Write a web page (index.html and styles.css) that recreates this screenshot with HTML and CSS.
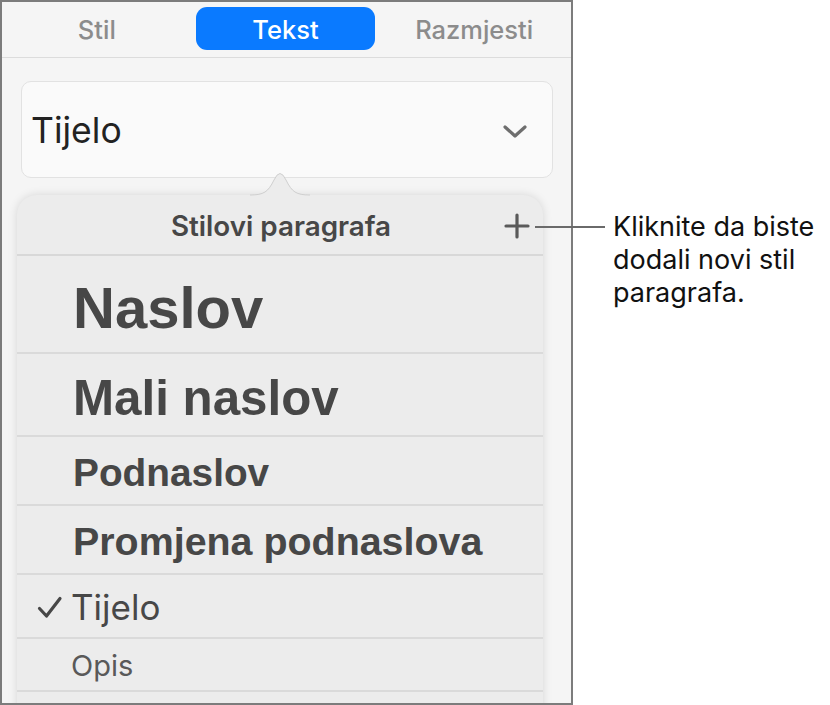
FILE: index.html
```html
<!DOCTYPE html>
<html lang="hr">
<head>
<meta charset="utf-8">
<title>Stilovi paragrafa</title>
<link rel="stylesheet" href="styles.css">
</head>
<body>
<div class="page">
  <div class="panel">
    <div class="tabs">
      <div class="tab">Stil</div>
      <div class="tab tab-active"><span class="pill">Tekst</span></div>
      <div class="tab">Razmjesti</div>
    </div>
    <div class="field">
      <span class="field-text">Tijelo</span>
      <svg class="chevron" width="26" height="16" viewBox="0 0 26 16"><path d="M3 3 L13 12 L23 3" fill="none" stroke="#6e6e6e" stroke-width="3.2" stroke-linecap="round" stroke-linejoin="round"/></svg>
    </div>
    <div class="popover">
      <svg class="arrow" width="60" height="28" viewBox="0 0 60 28"><path d="M0 27 C14 27 18 24 24 12 Q30 -1 36 12 C42 24 46 27 60 27 Z" fill="#ececec"/><path d="M0 27 C14 27 18 24 24 12 Q30 -1 36 12 C42 24 46 27 60 27" fill="none" stroke="#cfcfcf" stroke-width="1"/></svg>
      <div class="pop-head">
        <span class="pop-title">Stilovi paragrafa</span>
        <svg class="plus" width="26" height="26" viewBox="0 0 26 26"><path d="M13 2 V24 M2 13 H24" stroke="#5a5a5a" stroke-width="3.2" stroke-linecap="round"/></svg>
      </div>
      <div class="row r1"><span class="t-naslov">Naslov</span></div>
      <div class="row r2"><span class="t-mali">Mali naslov</span></div>
      <div class="row r3"><span class="t-pod">Podnaslov</span></div>
      <div class="row r4"><span class="t-pod t-wide">Promjena podnaslova</span></div>
      <div class="row r5">
        <svg class="check" width="26" height="23" viewBox="0 0 26 23"><path d="M2.5 12.5 L9.5 20 L23 2.5" fill="none" stroke="#474747" stroke-width="3.2" stroke-linecap="round" stroke-linejoin="round"/></svg>
        <span class="t-body">Tijelo</span>
      </div>
      <div class="row r6"><span class="t-opis">Opis</span></div>
      <div class="row r7"></div>
    </div>
  </div>
  <div class="callout">
    <div class="leader"></div>
    <p class="callout-text">Kliknite da biste<br>dodali novi stil<br>paragrafa.</p>
  </div>
</div>
</body>
</html>
```

FILE: styles.css
```css
html, body {
  margin: 0;
  padding: 0;
  background: #ffffff;
}
.page {
  display: flex;
  width: 830px;
  height: 705px;
  position: relative;
  font-family: "Inter", "Liberation Sans", sans-serif;
}
.panel {
  width: 573px;
  height: 705px;
  box-sizing: border-box;
  border: 2px solid #7c7c7c;
  background: #f5f5f5;
  overflow: hidden;
  flex: none;
}
.tabs {
  display: grid;
  grid-template-columns: 1fr 1fr 1fr;
  height: 55px;
  border-bottom: 1px solid #dcdcdc;
}
.tab {
  display: flex;
  justify-content: center;
  align-items: flex-start;
  padding-top: 7px;
  font-size: 25.5px;
  font-weight: 500;
  color: #8c8c8c;
  line-height: 42px;
}
.tab:last-child {
  padding-right: 4px;
}
.tab-active {
  padding-top: 5px;
}
.pill {
  display: block;
  box-sizing: border-box;
  width: 179px;
  height: 43px;
  padding-top: 3px;
  line-height: 40px;
  border-radius: 11px;
  background: #0a7aff;
  color: #ffffff;
  text-align: center;
  margin-left: -2px;
}
.field {
  margin: 23px 18px 0 19px;
  height: 97px;
  box-sizing: border-box;
  border: 1px solid #e2e2e2;
  border-radius: 10px;
  background: #fafafa;
  display: flex;
  align-items: center;
  justify-content: space-between;
  padding: 0 24px 0 9px;
}
.field-text {
  font-size: 35.5px;
  color: #222;
  font-weight: 400;
  margin-top: 1px;
}
.chevron {
  margin-top: 4px;
}
.popover {
  position: relative;
  margin: 17px 0 0 15px;
  width: 526px;
  height: 520px;
  background: #ececec;
  border-radius: 20px 20px 0 0;
  box-shadow: 0 0 10px rgba(0,0,0,0.13);
}
.arrow {
  position: absolute;
  top: -27px;
  left: 233px;
}
.pop-head {
  height: 59px;
  border-bottom: 2px solid #d8d8d8;
  display: flex;
  align-items: center;
  justify-content: center;
  position: relative;
}
.pop-title {
  font-size: 27.8px;
  font-weight: 600;
  color: #474747;
  margin-left: 2px;
  margin-top: 2px;
}
.plus {
  position: absolute;
  right: 13px;
  top: 18px;
}
.row {
  box-sizing: border-box;
  border-bottom: 2px solid #dadada;
  display: flex;
  align-items: center;
  padding-left: 56px;
  position: relative;
  color: #474747;
}
.r1 { height: 98px; }
.r2 { height: 83px; }
.r3 { height: 69px; }
.r4 { height: 69px; }
.r5 { height: 64px; padding-left: 54px; }
.r6 { height: 53px; padding-left: 54px; }
.r7 { height: 40px; border-bottom: none; }
.t-naslov {
  font-family: "Liberation Sans", Arial, sans-serif;
  font-weight: 700;
  font-size: 58px;
  margin-top: 6px;
}
.t-mali {
  font-family: "Liberation Sans", Arial, sans-serif;
  font-weight: 700;
  font-size: 49.3px;
  margin-top: 6px;
}
.t-pod {
  font-family: "Liberation Sans", Arial, sans-serif;
  font-weight: 700;
  font-size: 38.8px;
  margin-top: 4px;
}
.t-wide {
  font-size: 39.4px;
}
.check {
  position: absolute;
  left: 20px;
  top: 21px;
}
.t-body {
  font-size: 35px;
  color: #474747;
  margin-top: 1px;
}
.t-opis {
  font-size: 29px;
  color: #595959;
  margin-top: 2px;
}
.callout {
  flex: 1;
  position: relative;
}
.leader {
  position: absolute;
  left: -38px;
  top: 226px;
  width: 70px;
  height: 2px;
  background: #6a6a6a;
}
.callout-text {
  margin: 0;
  padding: 210px 0 0 40px;
  font-size: 27px;
  line-height: 33px;
  color: #111;
}
```
